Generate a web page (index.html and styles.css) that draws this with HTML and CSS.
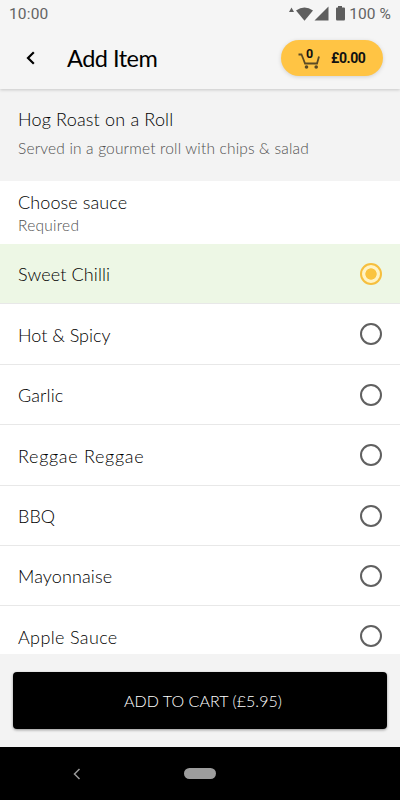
FILE: index.html
```html
<!DOCTYPE html>
<html lang="en">
<head>
<meta charset="utf-8">
<title>Add Item</title>
<link rel="stylesheet" href="styles.css">
</head>
<body>
<div class="app">
  <header class="top">
    <div class="status">
      <span class="clock">10:00</span>
      <svg class="signals" width="58" height="16" viewBox="0 0 58 16">
        <path d="M1 6 L3.500 1.500 L6 6Z"/>
        <path d="M8 4.500 Q16.500 -1.500 25 4.500 L16.500 14.800Z"/>
        <path d="M26.500 14.500 L40.500 0.500 V14.500Z"/>
        <path d="M50 0 h4 v1.500 h2 q1 0 1 1 V13 q0 1.500-1 1.500 H49 q-1 0-1-1.500 V2.500 q0-1 1-1 h1Z"/>
      </svg>
      <span class="battery">100 %</span>
    </div>
    <div class="toolbar">
      <svg class="back" width="12" height="14" viewBox="0 0 12 14"><path d="M9.800 1.200 L4 7 L9.800 12.800"/></svg>
      <h1>Add Item</h1>
      <div class="cart">
        <span class="basket">
          <svg width="24" height="24" viewBox="0 0 24 24"><path d="M1.500 8.500 H4.500 Q6 12 8 17.500 H20 L22 10.500"/><circle cx="9.500" cy="21" r="1.800"/><circle cx="19.200" cy="21" r="1.800"/></svg>
          <b class="count">0</b>
        </span>
        <b class="total">£0.00</b>
      </div>
    </div>
  </header>
  <section class="item">
    <h2>Hog Roast on a Roll</h2>
    <p>Served in a gourmet roll with chips &amp; salad</p>
  </section>
  <section class="group">
    <h3>Choose sauce</h3>
    <p>Required</p>
  </section>
  <ul class="options">
    <li class="selected"><span>Sweet Chilli</span><i class="radio"></i></li>
    <li><span class="snug">Hot &amp; Spicy</span><i class="radio"></i></li>
    <li><span>Garlic</span><i class="radio"></i></li>
    <li><span class="wider">Reggae Reggae</span><i class="radio"></i></li>
    <li><span class="snug">BBQ</span><i class="radio"></i></li>
    <li><span>Mayonnaise</span><i class="radio"></i></li>
    <li><span class="wide">Apple Sauce</span><i class="radio"></i></li>
  </ul>
  <footer class="checkout"><button>ADD TO CART (£5.95)</button></footer>
  <nav class="system">
    <svg width="10" height="12" viewBox="0 0 10 12"><path d="M7.500 1 L2.500 6 L7.500 11"/></svg>
    <span class="home"></span>
  </nav>
</div>
</body>
</html>
```
FILE: styles.css
```css
* { box-sizing: border-box; }
body, h1, h2, h3, p, ul { margin: 0; padding: 0; font-weight: 300; }
body { font-family: Lato, "Open Sans", sans-serif; background: #fff; color: #000; }
.app { width: 400px; height: 800px; display: flex; flex-direction: column; overflow: hidden; }
.top { height: 89px; flex: none; background: #f5f5f5; box-shadow: 0 1px 3px rgba(0,0,0,.18); z-index: 1; }
.status { height: 28px; display: flex; align-items: center; padding: 0 9px; font: 400 15.500px/28px Roboto, sans-serif; color: #636363; }
.clock { flex: 1; letter-spacing: .15px; }
.signals { fill: #5e5e5e; margin-right: 3px; margin-top: -1px; }
.battery { letter-spacing: .1px; }
.toolbar { height: 60px; display: flex; align-items: center; padding: 0 17px 0 24px; }
.back { fill: none; stroke: #000; stroke-width: 2.200; margin-right: 31px; }
h1 { flex: 1; font-size: 23.500px; font-weight: 400; line-height: 30px; letter-spacing: -.5px; margin-top: -1px; }
.cart { width: 102px; height: 36px; border-radius: 18px; background: #ffc444; display: flex; align-items: center; padding-left: 16px; box-shadow: 0 1px 4px rgba(0,0,0,.15); font-family: Roboto, "Liberation Sans", sans-serif; color: #111; }
.basket { position: relative; width: 24px; height: 26px; margin-right: 10px; }
.basket svg { fill: none; stroke: #5b4a25; stroke-width: 1.800; display: block; margin-top: 1px; }
.basket circle { fill: #5b4a25; stroke: none; }
.count { position: absolute; left: 9px; top: 1px; font-size: 12.500px; line-height: 15px; font-weight: 700; }
.total { font-size: 14px; font-weight: 700; letter-spacing: -.4px; }
.item { height: 92px; flex: none; background: #f3f3f3; padding: 17px 18px 0; }
h2 { font-size: 18px; line-height: 26px; letter-spacing: .18px; }
.item p { font-size: 15.500px; line-height: 22px; letter-spacing: .17px; margin-top: 5px; color: #505050; }
.group { height: 63px; flex: none; padding: 8px 18px 0; }
h3 { font-size: 18px; line-height: 26px; letter-spacing: .1px; }
.group p { font-size: 15.500px; line-height: 20px; letter-spacing: .25px; color: #505050; }
.options { height: 410px; flex: none; overflow: hidden; list-style: none; }
.options li { height: 60.400px; display: flex; align-items: center; justify-content: space-between; padding: 1.500px 18px 0; font-size: 18px; letter-spacing: .12px; border-bottom: 1px solid #e8e8e8; }
.options .snug { letter-spacing: 0; }
.options .wide { letter-spacing: .36px; }
.options .wider { letter-spacing: .7px; }
.options .selected { background: #edf7e5; }
.radio { width: 22px; height: 22px; border: 2px solid #606060; border-radius: 50%; margin-top: -1px; }
.selected .radio { border-color: #f6bf3e; background: radial-gradient(circle, #fac33f 5.300px, #fff3c4 6px); }
.checkout { height: 93px; flex: none; background: #f3f3f3; padding: 18px 13px; }
button { width: 374px; height: 57px; display: block; border: 0; border-radius: 4px; background: #000; color: #fff; font: 300 16px Lato, sans-serif; letter-spacing: .05px; padding: 0 0 0 6px; box-shadow: 0 1px 3px rgba(0,0,0,.4); }
.system { height: 53px; flex: none; background: #000; display: flex; align-items: center; padding-left: 72px; }
.system svg { fill: none; stroke: #999; stroke-width: 1.500; margin-right: 102px; }
.home { width: 32px; height: 11px; border-radius: 6px; background: #9d9d9d; }
```
